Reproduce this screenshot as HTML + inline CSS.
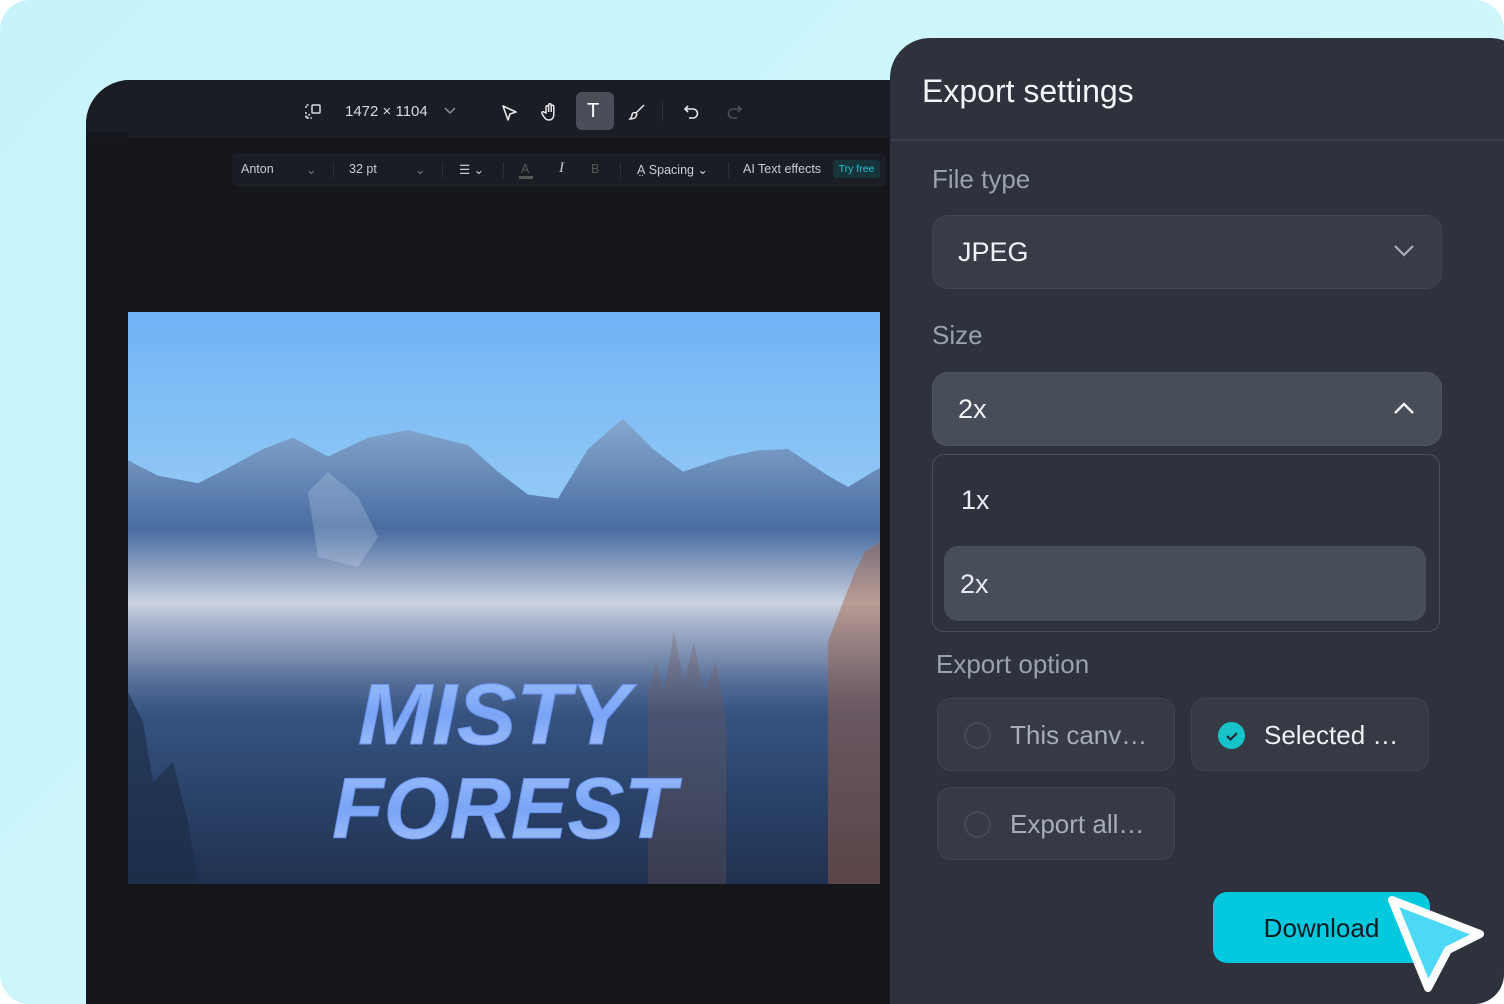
<!DOCTYPE html>
<html><head><meta charset="utf-8"><style>
*{margin:0;padding:0;box-sizing:border-box}
html,body{width:1504px;height:1004px;background:#fff;overflow:hidden;font-family:"Liberation Sans",sans-serif}
.bg{position:absolute;left:0;top:0;width:1504px;height:1004px;border-radius:30px;background:linear-gradient(135deg,#c8f3fd 0%,#cdf6fc 50%,#d3f7f9 100%);overflow:hidden}
.ed{position:absolute;left:86px;top:80px;width:840px;height:940px;background:#15161b;border-top-left-radius:44px;overflow:hidden}
.edh{position:absolute;left:0;top:0;width:840px;height:58px;background:#1b1d24}
.strip{position:absolute;left:0;top:52px;width:42px;height:10px;background:#17181d}
.tb{position:absolute;color:#d6d9de;font-size:15px}
.ft{position:absolute;left:146px;top:73px;width:654px;height:34px;background:#1b1d24;border-radius:6px;color:#c9ccd2;font-size:12.5px}
.ft span{position:absolute;top:9px}
.sep{position:absolute;top:9px;width:1px;height:16px;background:#2e3038}
.img{position:absolute;left:42px;top:232px;width:752px;height:572px;overflow:hidden}
.panel{position:absolute;left:890px;top:38px;width:640px;height:1000px;background:#2e323c;border-top-left-radius:40px;border-top-right-radius:40px}
.lbl{position:absolute;color:#9aa2ad;font-size:26px}
.sel{position:absolute;left:42px;width:510px;height:74px;border-radius:16px;border:1px solid #40454f;background:#373c47;color:#f0f2f5;font-size:27px}
.opt{position:absolute;width:238px;height:73px;border-radius:14px;border:1px solid #40454f;background:#353a45;font-size:26px;color:#a6adb7}
.rad{position:absolute;left:26px;top:23px;width:27px;height:27px;border-radius:50%;border:2px solid #454b55}
</style></head><body>
<div class="bg">
<div class="ed">
 <div class="edh"></div>
 <div class="strip"></div>
 <svg style="position:absolute;left:218px;top:23px" width="18" height="18" viewBox="0 0 18 18" fill="none" stroke="#d6d9de" stroke-width="1.5"><rect x="8" y="2" width="8" height="8" rx="1"/><path d="M2 9v6h6M2 15l5-5M2 5V2h3" stroke-dasharray="2 1.5"/></svg>
 <div class="tb" style="left:259px;top:23px">1472 × 1104</div>
 <svg style="position:absolute;left:357px;top:26px" width="14" height="10" viewBox="0 0 14 10" fill="none" stroke="#8a8f98" stroke-width="1.5"><path d="M2 2l5 5 5-5"/></svg>
 <svg style="position:absolute;left:414px;top:23px" width="20" height="20" viewBox="0 0 20 20" fill="none" stroke="#e6e8ec" stroke-width="1.6"><path d="M3 3l13 6-6 2-2 6z" stroke-linejoin="round"/></svg>
 <svg style="position:absolute;left:454px;top:22px" width="20" height="20" viewBox="0 0 20 20" fill="none" stroke="#e6e8ec" stroke-width="1.5"><path d="M6 11V5a1.3 1.3 0 012.6 0v5V3a1.3 1.3 0 012.6 0v7V4.5a1.3 1.3 0 012.6 0V12c0 4-2 6-5 6s-4-2-6-5l-1-2a1.2 1.2 0 012-1z"/></svg>
 <div style="position:absolute;left:490px;top:12px;width:38px;height:38px;border-radius:6px;background:#4a4e58"></div>
 <div class="tb" style="left:501px;top:20px;font-size:20px;color:#fff">T</div>
 <svg style="position:absolute;left:542px;top:23px" width="18" height="18" viewBox="0 0 18 18" fill="none" stroke="#e6e8ec" stroke-width="1.5"><path d="M16 2L8 10M8 10c-2-1-4 0-4 2s-1 3-2 4c3 0 6-1 6-3 1-1 1-2 0-3z"/></svg>
 <div style="position:absolute;left:576px;top:21px;width:1px;height:20px;background:#2f3138"></div>
 <svg style="position:absolute;left:597px;top:23px" width="18" height="18" viewBox="0 0 18 18" fill="none" stroke="#e6e8ec" stroke-width="1.6"><path d="M5 3L2 6l3 3M2 6h8a4.5 4.5 0 010 9H6"/></svg>
 <svg style="position:absolute;left:639px;top:23px" width="18" height="18" viewBox="0 0 18 18" fill="none" stroke="#4b4e56" stroke-width="1.6"><path d="M13 3l3 3-3 3M16 6H8a4.5 4.5 0 000 9h4"/></svg>
 <div class="ft">
  <span style="left:9px">Anton</span><span style="left:74px;color:#777">⌄</span>
  <div class="sep" style="left:101px"></div>
  <span style="left:117px">32 pt</span><span style="left:183px;color:#777">⌄</span>
  <div class="sep" style="left:210px"></div>
  <span style="left:227px">☰ ⌄</span>
  <div class="sep" style="left:271px"></div>
  <span style="left:289px;color:#555">A</span><div style="position:absolute;left:287px;top:23px;width:14px;height:3px;background:#555"></div>
  <span style="left:327px;font-style:italic;font-family:'Liberation Serif';font-size:15px;top:7px">I</span>
  <span style="left:359px;color:#555">B</span>
  <div class="sep" style="left:388px"></div>
  <span style="left:405px">A̤ Spacing ⌄</span>
  <div class="sep" style="left:496px"></div>
  <span style="left:511px">AI Text effects</span>
  <div style="position:absolute;left:601px;top:7px;width:47px;height:18px;background:#17343a;border-radius:3px;color:#1fc6d6;font-size:10.5px;text-align:center;line-height:18px">Try free</div>
 </div>
 <div class="img">
 <svg width="752" height="572" viewBox="0 0 752 572">
  <defs>
   <linearGradient id="sky" x1="0" y1="0" x2="0" y2="1"><stop offset="0" stop-color="#6fb3f5"/><stop offset=".3" stop-color="#8fc7f5"/><stop offset="1" stop-color="#a0c8ea"/></linearGradient>
   <linearGradient id="mt" x1="0" y1="0" x2="0" y2="1"><stop offset="0" stop-color="#86a9d0"/><stop offset=".25" stop-color="#45699e"/><stop offset=".5" stop-color="#3e5f92"/><stop offset="1" stop-color="#1f3150"/></linearGradient>
   <linearGradient id="fog" x1="0" y1="0" x2="0" y2="1"><stop offset="0" stop-color="#dfe3ef" stop-opacity="0"/><stop offset=".4" stop-color="#e4e5ee" stop-opacity=".85"/><stop offset=".7" stop-color="#aeb6cb" stop-opacity=".5"/><stop offset="1" stop-color="#6a7c9a" stop-opacity="0"/></linearGradient>
   <linearGradient id="txt" x1="0" y1="0" x2="0" y2="1"><stop offset="0" stop-color="#9dc0ff"/><stop offset=".5" stop-color="#7aa4f6"/><stop offset="1" stop-color="#a8c6fa"/></linearGradient>
  </defs>
  <rect width="752" height="572" fill="url(#sky)"/>
  <g transform="scale(1,0.761)">
  <path d="M0 195L30 215 70 225 100 205 135 180 165 165 200 190 240 165 280 155 310 165 340 175 370 210 400 240 430 245 460 180 495 140 525 180 555 210 600 190 630 182 660 180 700 215 720 230 745 210 752 205V752H0z" fill="url(#mt)"/>
  </g>
  <path d="M180 180l20-20 30 25 20 40-20 30-40-10z" fill="#c9dcee" opacity=".25"/>
  <rect x="0" y="215" width="752" height="190" fill="url(#fog)"/>
  <path d="M520 572V380l8-30 8 30 10-60 10 50 10-40 10 50 12-30 10 60V572z" fill="#7c5a52" opacity=".3"/>
  <path d="M700 572V330l15-40 12-30 10-20 15-10V572z" fill="#a45e3c" opacity=".45"/>
  <path d="M0 572V380l15 30 10 60 20-20 15 60 10 62z" fill="#1b2b42" opacity=".6"/>
  <g font-family="Liberation Sans" font-style="italic" font-weight="bold" fill="url(#txt)" stroke="#6a92ee" stroke-width="1" text-anchor="middle">
   <text x="366" y="432" font-size="86" textLength="272" lengthAdjust="spacingAndGlyphs">MISTY</text>
   <text x="376" y="526" font-size="86" textLength="344" lengthAdjust="spacingAndGlyphs">FOREST</text>
  </g>
 </svg>
 </div>
</div>
<div class="panel">
 <div style="position:absolute;left:32px;top:35px;font-size:32px;color:#f2f4f7">Export settings</div>
 <div style="position:absolute;left:0;top:101px;width:640px;height:2px;background:#3a3f49"></div>
 <div class="lbl" style="left:42px;top:126px">File type</div>
 <div class="sel" style="top:177px"><span style="position:absolute;left:25px;top:21px">JPEG</span>
  <svg style="position:absolute;left:460px;top:28px" width="22" height="14" viewBox="0 0 22 14" fill="none" stroke="#aab0b9" stroke-width="2.2"><path d="M2 2l9 9 9-9"/></svg></div>
 <div class="lbl" style="left:42px;top:282px">Size</div>
 <div class="sel" style="top:334px;background:#474d59;border-color:#505661"><span style="position:absolute;left:25px;top:21px">2x</span>
  <svg style="position:absolute;left:460px;top:28px" width="22" height="14" viewBox="0 0 22 14" fill="none" stroke="#f0f2f5" stroke-width="2.4"><path d="M2 12l9-9 9 9"/></svg></div>
 <div style="position:absolute;left:42px;top:416px;width:508px;height:178px;border:1px solid #4a505b;border-radius:12px">
  <div style="position:absolute;left:28px;top:30px;font-size:27px;color:#e8ebef">1x</div>
  <div style="position:absolute;left:11px;top:91px;width:482px;height:75px;border-radius:14px;background:#474d59"><span style="position:absolute;left:16px;top:23px;font-size:27px;color:#e8ebef">2x</span></div>
 </div>
 <div class="lbl" style="left:46px;top:611px">Export option</div>
 <div class="opt" style="left:47px;top:660px"><div class="rad"></div><span style="position:absolute;left:72px;top:21px">This canv…</span></div>
 <div class="opt" style="left:301px;top:660px;color:#eef0f3"><div class="rad" style="background:#16c3c9;border-color:#16c3c9"><svg style="position:absolute;left:5px;top:6px" width="14" height="12" viewBox="0 0 14 12" fill="none" stroke="#1f2a33" stroke-width="2.2"><path d="M2 6l3.5 3.5L12 3"/></svg></div><span style="position:absolute;left:72px;top:21px">Selected …</span></div>
 <div class="opt" style="left:47px;top:749px"><div class="rad"></div><span style="position:absolute;left:72px;top:21px">Export all…</span></div>
 <div style="position:absolute;left:323px;top:854px;width:217px;height:71px;border-radius:14px;background:#00c9de;color:#0c1a22;font-size:26px;text-align:center;line-height:73px">Download</div>
</div>
<svg style="position:absolute;left:1380px;top:888px" width="112" height="112" viewBox="0 0 112 112"><path d="M12 12L100 46 68 62 48 100z" fill="#4dd8f7" stroke="#fff" stroke-width="8" stroke-linejoin="round"/></svg>
</div>
</body></html>
